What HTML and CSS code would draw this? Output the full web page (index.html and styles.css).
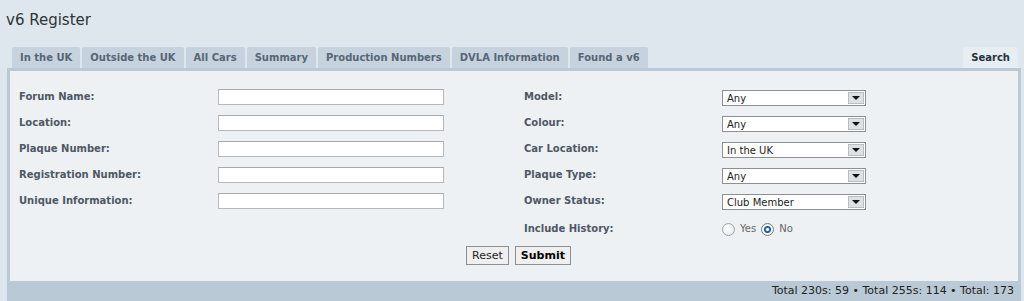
FILE: index.html
```html
<!DOCTYPE html>
<html lang="en">
<head>
    <meta charset="UTF-8">
    <meta name="viewport" content="width=device-width, initial-scale=1.0">
    <title>v6 Register</title>
    <link rel="stylesheet" href="styles.css">
</head>
<body>
    <h1 class="titulo">v6 Register</h1>

    <div class="tabs">
        <a class="tab">In the UK</a>
        <a class="tab">Outside the UK</a>
        <a class="tab">All Cars</a>
        <a class="tab">Summary</a>
        <a class="tab">Production Numbers</a>
        <a class="tab">DVLA Information</a>
        <a class="tab">Found a v6</a>
        <a class="tab activo">Search</a>
    </div>

    <div class="marco">
        <form class="panel">
            <div class="campos">
                <label for="forum">Forum Name:</label>
                <input type="text" id="forum">
                <label>Model:</label>
                <div class="sel"><select><option>Any</option></select><span class="flecha"></span></div>

                <label for="location">Location:</label>
                <input type="text" id="location">
                <label>Colour:</label>
                <div class="sel"><select><option>Any</option></select><span class="flecha"></span></div>

                <label for="plaque">Plaque Number:</label>
                <input type="text" id="plaque">
                <label>Car Location:</label>
                <div class="sel"><select><option>In the UK</option></select><span class="flecha"></span></div>

                <label for="reg">Registration Number:</label>
                <input type="text" id="reg">
                <label>Plaque Type:</label>
                <div class="sel"><select><option>Any</option></select><span class="flecha"></span></div>

                <label for="unique">Unique Information:</label>
                <input type="text" id="unique">
                <label>Owner Status:</label>
                <div class="sel"><select><option>Club Member</option></select><span class="flecha"></span></div>

                <span></span>
                <span></span>
                <label class="ultima">Include History:</label>
                <div class="radios ultima">
                    <input type="radio" name="historia" id="si"><label for="si">Yes</label>
                    <input type="radio" name="historia" id="no" checked><label for="no">No</label>
                </div>
            </div>

            <div class="botones">
                <input type="reset" value="Reset" class="boton">
                <input type="submit" value="Submit" class="boton fuerte">
            </div>
        </form>

        <div class="pie">Total 230s: 59 &bull; Total 255s: 114 &bull; Total: 173</div>
    </div>
</body>
</html>
```

FILE: styles.css
```css
body {
    margin: 0;
    background-color: #dfe7ee;
    font-family: "DejaVu Sans", Verdana, sans-serif;
    color: #333;
    height: 301px;
    overflow: hidden;
}
.titulo {
    margin: 0;
    padding: 11px 0 0 6px;
    font-size: 15px;
    font-weight: normal;
    line-height: 18px;
    color: #2e3438;
}
.tabs {
    display: flex;
    margin: 18px 6px 0 12px;
    gap: 2px;
}
.tab {
    height: 21px;
    line-height: 22px;
    padding: 0 8px;
    background-color: #c6d3de;
    color: #566676;
    font-size: 10px;
    font-weight: bold;
    border-radius: 2px 2px 0 0;
}
.tab.activo {
    margin-left: auto;
    background-color: #e6edf3;
    color: #27313b;
}
.marco {
    margin: 0 3px 0 7px;
    background-color: #bac9d6;
    padding: 3px 3px 0 3px;
}
.panel {
    background-color: #edf1f4;
    padding: 18px 0 16px 9px;
}
.campos {
    display: grid;
    grid-template-columns: 199px 306px 198px 144px;
    grid-auto-rows: 26px;
    align-items: start;
}
.campos label {
    font-size: 10px;
    font-weight: bold;
    color: #4d5864;
    line-height: 16px;
}
.campos input[type="text"] {
    box-sizing: border-box;
    width: 226px;
    height: 16px;
    margin: 0;
    border: 1px solid #b5b9bc;
    border-top-color: #a6aaad;
    background-color: #fff;
}
.sel {
    position: relative;
    width: 144px;
    height: 16px;
    margin-top: 1px;
}
.sel select {
    display: block;
    appearance: none;
    box-sizing: border-box;
    width: 144px;
    height: 16px;
    margin: 0;
    padding: 0 0 0 4px;
    border: 1px solid #8d9196;
    background-color: #fff;
    font-family: "DejaVu Sans", Verdana, sans-serif;
    font-size: 10px;
    color: #222;
}
.flecha {
    position: absolute;
    right: 2px;
    top: 2px;
    width: 16px;
    height: 12px;
    background-color: #dde0e4;
    border: 1px solid #b9bdc2;
    box-sizing: border-box;
}
.flecha::after {
    content: "";
    position: absolute;
    left: 3px;
    top: 3px;
    border-left: 4px solid transparent;
    border-right: 4px solid transparent;
    border-top: 4px solid #111;
}
.ultima {
    margin-top: 2px;
}
.radios {
    display: flex;
    align-items: center;
    height: 16px;
}
.radios label {
    font-weight: normal;
    color: #666;
    margin-right: 5px;
}
.radios input {
    appearance: none;
    width: 13px;
    height: 13px;
    margin: 0 5px 0 0;
    border: 1px solid #9ba6af;
    border-radius: 50%;
    background: radial-gradient(circle at 40% 35%, #fff, #e2e6ea);
    box-sizing: border-box;
}
.radios input:checked {
    background: radial-gradient(circle, #fff 0 1px, #3a6fb0 2px, #1f4f8e 3px, #f4f6f8 4px);
    border-color: #6d7c8a;
}
.botones {
    display: flex;
    justify-content: center;
    gap: 6px;
    margin-top: 1px;
}
.boton {
    height: 19px;
    padding: 0 5px;
    background-color: #efefef;
    border: 1px solid #8e8e8e;
    font-family: "DejaVu Sans", Verdana, sans-serif;
    font-size: 11px;
    color: #222;
}
.boton.fuerte {
    font-weight: bold;
    color: #000;
}
.pie {
    height: 20px;
    line-height: 20px;
    text-align: right;
    padding-right: 4px;
    font-size: 11px;
    color: #222;
}
```
